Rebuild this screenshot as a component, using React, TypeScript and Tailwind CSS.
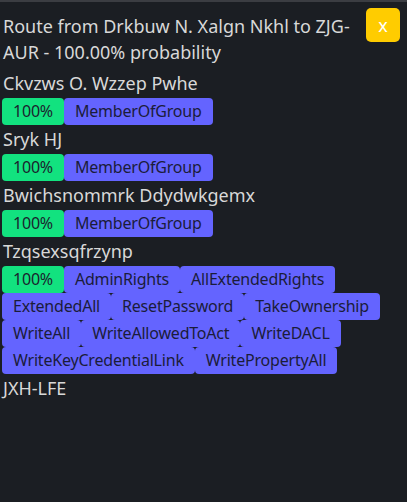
const routes = [
  { name: 'Ckvzws O. Wzzep Pwhe', rights: ['MemberOfGroup'] },
  { name: 'Sryk HJ', rights: ['MemberOfGroup'] },
  { name: 'Bwichsnommrk Ddydwkgemx', rights: ['MemberOfGroup'] },
  {
    name: 'Tzqsexsqfrzynp',
    rights: [
      'AdminRights', 'AllExtendedRights', 'ExtendedAll', 'ResetPassword', 'TakeOwnership',
      'WriteAll', 'WriteAllowedToAct', 'WriteDACL', 'WriteKeyCredentialLink', 'WritePropertyAll',
    ],
  },
]

export default function App() {
  return (
    <div
      className="relative w-[407px] h-[502px] overflow-hidden bg-[#1b1e23] border-t-2 border-[#3b3d42] text-[#d8d8d8]"
      style={{ fontFamily: '"Noto Sans", "Open Sans", sans-serif' }}
    >
      <div className="flex items-start justify-between pl-[3px] pr-[7px] pt-[11px]">
        <div className="w-[360px] text-[18px] leading-[26px]">
          Route from Drkbuw N. Xalgn Nkhl to ZJG-AUR - 100.00% probability
        </div>
        <button className="-mt-[5px] w-[34px] h-[34px] rounded-[5px] bg-[#ffcc00] text-white text-[18px] leading-none">
          x
        </button>
      </div>
      <div className="mt-[4px] pl-[2px] pr-[6px]">
        {routes.map(r => (
          <div key={r.name}>
            <div className="pl-[1px] text-[18px] leading-[29px]">{r.name}</div>
            <div className="flex flex-wrap">
              <span className="h-[27px] px-[11px] rounded-[4px] bg-[#12e27f] text-[#1b1f2e] text-[16px] leading-[27px] tracking-[-0.2px]">
                100%
              </span>
              {r.rights.map(x => (
                <span key={x} className="h-[27px] px-[11px] rounded-[4px] bg-[#6464ff] text-[#1b1c3a] text-[16px] leading-[27px] tracking-[-0.2px]">
                  {x}
                </span>
              ))}
            </div>
          </div>
        ))}
        <div className="pl-[1px] text-[18px] leading-[29px]">JXH-LFE</div>
      </div>
    </div>
  )
}
